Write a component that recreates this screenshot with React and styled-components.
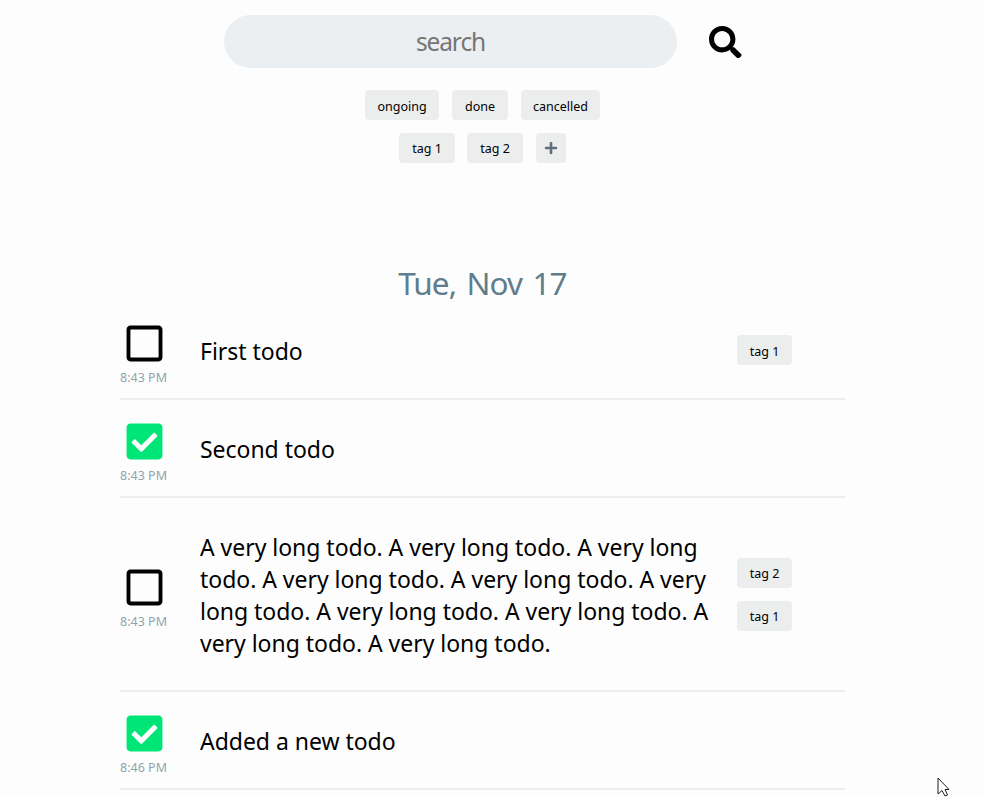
import React from "react";
import styled, { createGlobalStyle } from "styled-components";
import { FaSearch, FaPlus, FaRegSquare, FaCheckSquare } from "react-icons/fa";

const GlobalStyle = createGlobalStyle`
  * { box-sizing: border-box; }
  body {
    margin: 0;
    background: #fdfdfd;
    color: #000;
    font-family: "Noto Sans", "Open Sans", sans-serif;
    overflow: hidden;
  }
`;

const Page = styled.main`
  position: relative;
  width: 984px;
  height: 797px;
  padding: 15px 0 0 120px;
  overflow: hidden;
`;

const Column = styled.div`
  width: 725px;
`;

const SearchBar = styled.form`
  display: flex;
  align-items: center;
  padding-left: 104px;
`;

const SearchInput = styled.input`
  width: 453px;
  height: 53px;
  padding: 0;
  border: 0;
  border-radius: 27px;
  outline: 0;
  background: #eceff1;
  text-align: center;
  font-family: "Noto Sans", sans-serif;
  font-size: 24.5px;
  letter-spacing: -1.1px;

  &::placeholder {
    color: #757575;
    opacity: 1;
  }
`;

const SearchButton = styled.button`
  display: flex;
  margin: 1px 0 0 32px;
  padding: 0;
  border: 0;
  background: none;
  color: #000;
  font-size: 32.5px;
`;

const Filters = styled.div`
  display: flex;
  flex-direction: column;
  align-items: center;
  gap: 13px;
  margin-top: 22px;
`;

const FilterRow = styled.div`
  display: flex;
  gap: ${(p) => p.$gap}px;
`;

const Tag = styled.button`
  display: flex;
  align-items: center;
  justify-content: center;
  width: ${(p) => p.$width}px;
  height: 30px;
  margin-left: ${(p) => (p.$icon ? 1 : 0)}px;
  padding: ${(p) => p.$top ?? 3}px 0 0;
  border: 0;
  border-radius: 4px;
  background: #eceeee;
  color: ${(p) => (p.$icon ? "#607078" : "#000")};
  font-family: "Noto Sans", sans-serif;
  font-size: 12.5px;
  line-height: 18px;
  white-space: nowrap;
`;

const DayTitle = styled.h2`
  height: 44px;
  margin: 98px 0 0;
  color: #607d8b;
  text-align: center;
  font-size: 31.5px;
  font-weight: 400;
  line-height: 44px;
  letter-spacing: -0.9px;
  word-spacing: 3px;
`;

const TodoList = styled.ul`
  margin: -3px 0 0;
  padding: 0;
  list-style: none;
`;

const Todo = styled.li`
  display: flex;
  align-items: center;
  height: ${(p) => p.$height}px;
  border-bottom: 2px solid #eceff1;
`;

const Status = styled.div`
  display: flex;
  flex-direction: column;
  align-items: center;
  width: 48px;
  padding: 10px 1px 0 0;
  color: ${(p) => (p.$done ? "#00e676" : "#000")};
  font-size: 41px;

  svg { display: block; margin-left: 1px; }
`;

const Time = styled.time`
  margin-top: 5px;
  color: #90a4ae;
  font-size: 12.5px;
  line-height: 18px;
  white-space: nowrap;
`;

const TodoText = styled.p`
  width: 537px;
  margin: 0 0 0 32px;
  padding-top: 2px;
  font-size: 23px;
  line-height: 32px;
  letter-spacing: -0.03px;
`;

const Line = styled.span`
  display: block;
  white-space: nowrap;
`;

const TodoTags = styled.div`
  display: flex;
  flex-direction: column;
  gap: 13px;
`;

const Cursor = styled.svg`
  position: absolute;
  left: 937px;
  top: 777px;
`;

const todos = [
  { height: 98, lines: ["First todo"], time: "8:43 PM", tags: ["tag 1"] },
  { height: 98, lines: ["Second todo"], time: "8:43 PM", done: true, tags: [] },
  {
    height: 194,
    lines: [
      "A very long todo. A very long todo. A very long",
      "todo. A very long todo. A very long todo. A very",
      "long todo. A very long todo. A very long todo. A",
      "very long todo. A very long todo.",
    ],
    time: "8:43 PM",
    tags: ["tag 2", "tag 1"],
  },
  { height: 98, lines: ["Added a new todo"], time: "8:46 PM", done: true, tags: [] },
];

export default function App() {
  return (
    <Page>
      <GlobalStyle />
      <Column>
        <SearchBar>
          <SearchInput placeholder="search" aria-label="search" />
          <SearchButton type="button" aria-label="Search"><FaSearch /></SearchButton>
        </SearchBar>
        <Filters>
          <FilterRow $gap={13}>
            <Tag $width={74}>ongoing</Tag>
            <Tag $width={56}>done</Tag>
            <Tag $width={79}>cancelled</Tag>
          </FilterRow>
          <FilterRow $gap={12}>
            <Tag $width={56} $top={2}>tag 1</Tag>
            <Tag $width={56} $top={2}>tag 2</Tag>
            <Tag $width={30} $top={0} $icon aria-label="Add tag"><FaPlus size={14} /></Tag>
          </FilterRow>
        </Filters>
        <DayTitle>Tue, Nov 17</DayTitle>
        <TodoList>
          {todos.map((t, i) => (
            <Todo key={i} $height={t.height}>
              <Status $done={t.done}>
                {t.done ? <FaCheckSquare /> : <FaRegSquare />}
                <Time>{t.time}</Time>
              </Status>
              <TodoText>
                {t.lines.map((l) => <Line key={l}>{l}</Line>)}
              </TodoText>
              <TodoTags>
                {t.tags.map((tag) => (
                  <Tag key={tag} $width={55} $top={t.tags.length > 1 ? 2 : 3}>{tag}</Tag>
                ))}
              </TodoTags>
            </Todo>
          ))}
        </TodoList>
      </Column>
      <Cursor width="13" height="20" viewBox="0 0 13 20">
        <path d="M1 1V17L5 13.5L8 19L10.5 18L8 12.5H12Z" fill="#fff" stroke="#1b1f2a" strokeWidth="1" />
      </Cursor>
    </Page>
  );
}
